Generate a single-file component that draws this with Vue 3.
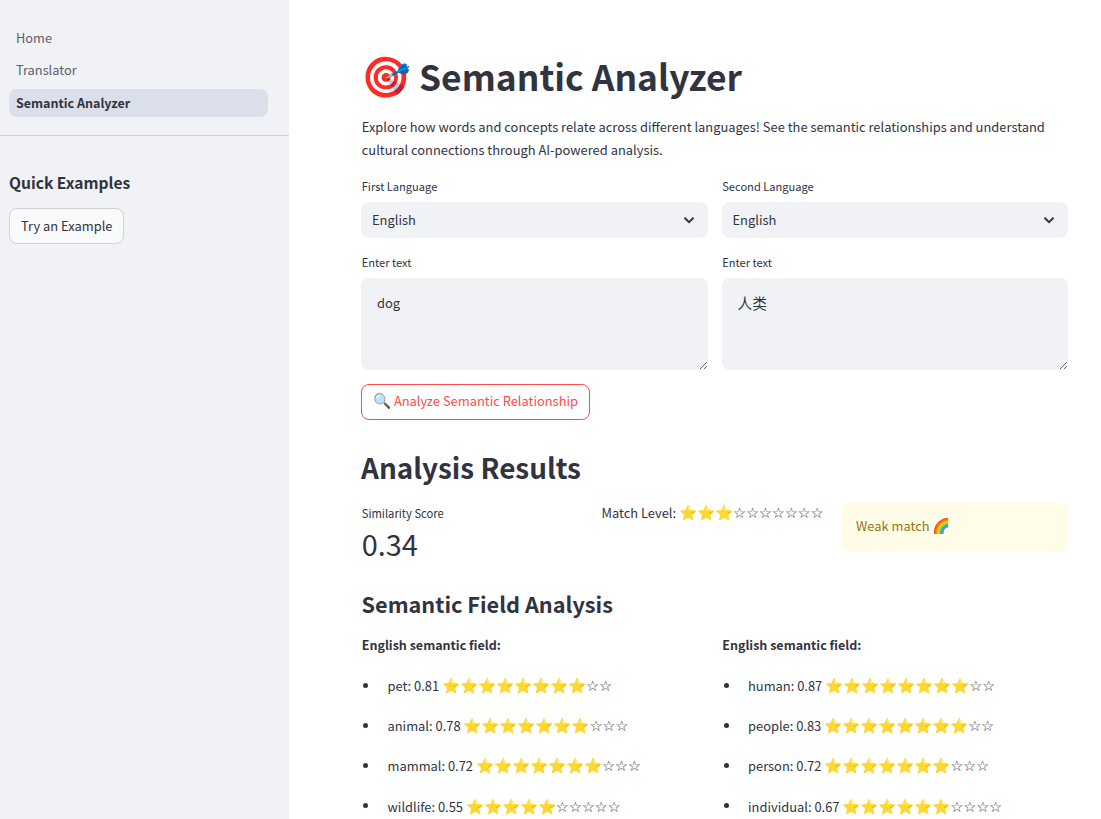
<template>
  <div class="app">
    <aside class="sidebar">
      <nav class="nav">
        <a v-for="p in pages" :key="p" class="nav-link" :class="{ active: p === 'Semantic Analyzer' }">{{ p }}</a>
      </nav>
      <div class="side-body">
        <h3>Quick Examples</h3>
        <button class="example-btn">Try an Example</button>
      </div>
    </aside>

    <main class="main">
      <div class="content">
        <h1><span class="title-emoji">🎯</span> Semantic Analyzer</h1>
        <p class="intro">Explore how words and concepts relate across different languages! See the semantic relationships and understand cultural connections through AI-powered analysis.</p>

        <div class="cols">
          <div class="field">
            <label>First Language</label>
            <div class="select">
              <span class="select-value">English</span>
              <svg width="16" height="16" viewBox="0 0 16 16"><path d="M3.5 5.8 8 10.2l4.5-4.4" fill="none" stroke="#31333f" stroke-width="2"/></svg>
            </div>
          </div>
          <div class="field">
            <label>Second Language</label>
            <div class="select">
              <span class="select-value">English</span>
              <svg width="16" height="16" viewBox="0 0 16 16"><path d="M3.5 5.8 8 10.2l4.5-4.4" fill="none" stroke="#31333f" stroke-width="2"/></svg>
            </div>
          </div>
        </div>

        <div class="cols text-row">
          <div class="field">
            <label>Enter text</label>
            <textarea v-model="left"></textarea>
          </div>
          <div class="field">
            <label>Enter text</label>
            <textarea v-model="right" class="cjk"></textarea>
          </div>
        </div>

        <button class="analyze"><span class="emoji">🔍</span> Analyze Semantic Relationship</button>

        <h2>Analysis Results</h2>

        <div class="metrics">
          <div class="metric">
            <div class="metric-label">Similarity Score</div>
            <div class="metric-value">0.34</div>
          </div>
          <div class="match">Match Level: <span class="emoji">{{ '⭐'.repeat(3) }}</span><span class="hollow">{{ '☆'.repeat(7) }}</span></div>
          <div class="alert">Weak match <span class="emoji">🌈</span></div>
        </div>

        <h3 class="field-title">Semantic Field Analysis</h3>

        <div class="cols">
          <div v-for="(col, i) in fields" :key="i" class="sem-col">
            <p class="sem-head">English semantic field:</p>
            <ul>
              <li v-for="w in col" :key="w.word">
                <span>{{ w.word }}: {{ w.score }} <span class="emoji">{{ '⭐'.repeat(w.n) }}</span><span class="hollow">{{ '☆'.repeat(10 - w.n) }}</span></span>
              </li>
            </ul>
          </div>
        </div>
      </div>
    </main>
  </div>
</template>

<script setup>
import { ref } from 'vue'

const pages = ['Home', 'Translator', 'Semantic Analyzer']
const left = ref('dog')
const right = ref('人类')

const fields = [
  [
    { word: 'pet', score: '0.81', n: 8 },
    { word: 'animal', score: '0.78', n: 7 },
    { word: 'mammal', score: '0.72', n: 7 },
    { word: 'wildlife', score: '0.55', n: 5 }
  ],
  [
    { word: 'human', score: '0.87', n: 8 },
    { word: 'people', score: '0.83', n: 8 },
    { word: 'person', score: '0.72', n: 7 },
    { word: 'individual', score: '0.67', n: 6 }
  ]
]
</script>

<style>
html, body {
  margin: 0;
  background: #fff;
}
</style>

<style scoped>
.app {
  display: flex;
  height: 819px;
  overflow: hidden;
  font-family: "Noto Sans CJK SC", "Noto Sans", sans-serif;
  font-size: 12.9px;
  color: #31333f;
}

.emoji {
  font-size: 14.7px;
}

.hollow {
  font-family: "DejaVu Sans", sans-serif;
  font-size: 14.7px;
  letter-spacing: -0.25px;
}

.sidebar {
  width: 289px;
  flex-shrink: 0;
  background: #f0f2f6;
}

.nav {
  display: flex;
  flex-direction: column;
  gap: 4px;
  padding: 25px 21px 18px 9px;
  border-bottom: 1px solid #d0d2d8;
}

.nav-link {
  height: 28px;
  line-height: 25px;
  padding: 0 7px;
  border-radius: 8px;
  font-size: 12.8px;
  color: #5c5e69;
}

.nav-link.active {
  background: #dbdfe9;
  color: #31333f;
  line-height: 27px;
  font-size: 12.5px;
  font-weight: 700;
}

.side-body {
  padding: 35px 9px 0;
}

.side-body h3 {
  margin: 0 0 15px;
  font-size: 15.6px;
  line-height: 22px;
  font-weight: 700;
}

.example-btn {
  height: 36px;
  padding: 0 11px 2px;
  background: #f9fafc;
  border: 1px solid #cfd1d6;
  border-radius: 8px;
  font: inherit;
  color: #31333f;
}

.main {
  flex: 1;
}

.content {
  width: 707px;
  margin-left: 72px;
  padding-top: 49px;
}

h1 {
  margin: 0 0 14px;
  font-size: 35.4px;
  line-height: 50px;
  font-weight: 700;
}

.title-emoji {
  font-size: 40px;
}

.intro {
  margin: 0 0 17px;
  line-height: 23px;
  padding-left: 0.75px;
}

.cols {
  display: grid;
  grid-template-columns: 346.5px 346.5px;
  gap: 14px;
}

.field label {
  display: block;
  font-size: 11.1px;
  line-height: 16px;
  margin: 0 0 8px;
  padding-left: 0.75px;
}

.select {
  display: flex;
  align-items: center;
  justify-content: space-between;
  height: 36px;
  padding: 0 11px;
  background: #f0f2f6;
  border-radius: 8px;
}

.select-value {
  padding-bottom: 2px;
}

.text-row {
  margin-top: 16px;
}

textarea {
  display: block;
  box-sizing: border-box;
  width: 100%;
  height: 92px;
  padding: 15px 16px;
  border: none;
  border-radius: 8px;
  background: #f0f2f6;
  font: inherit;
  color: #31333f;
  outline: none;
}

textarea.cjk {
  font-size: 14.7px;
  padding-top: 14px;
}

.analyze {
  display: block;
  height: 36px;
  margin-top: 14px;
  padding: 0 11px 5px;
  background: #fff;
  border: 1px solid #ff4b4b;
  border-radius: 8px;
  font: inherit;
  color: #ff4b4b;
}

h2 {
  margin: 26px 0 14px;
  font-size: 27.9px;
  line-height: 42px;
  font-weight: 700;
}

.metrics {
  display: flex;
  align-items: flex-start;
}

.metric {
  box-sizing: border-box;
  width: 240.5px;
  padding: 1px 0 0 0.75px;
}

.metric-label {
  font-size: 11.2px;
  line-height: 20px;
}

.metric-value {
  font-size: 28.9px;
  line-height: 40px;
}

.match {
  width: 240px;
  line-height: 20px;
}

.alert {
  flex: 1;
  height: 50px;
  line-height: 46px;
  padding: 0 14.5px;
  background: #fffce7;
  border-radius: 8px;
  color: #9a7410;
}

.field-title {
  margin: 24px 0 14px;
  padding-left: 0.5px;
  font-size: 21.7px;
  line-height: 34px;
  font-weight: 700;
}

.sem-head {
  margin: 0 0 19px;
  padding-left: 0.75px;
  font-size: 12.5px;
  font-weight: 700;
}

ul {
  margin: 0;
  padding: 0;
  list-style: none;
}

li {
  display: flex;
  align-items: center;
  line-height: 23.5px;
  margin-bottom: 15.7px;
}

li::before {
  content: "";
  width: 5px;
  height: 5px;
  margin: 0 19.5px 0 2px;
  border-radius: 50%;
  background: #31333f;
}
</style>
